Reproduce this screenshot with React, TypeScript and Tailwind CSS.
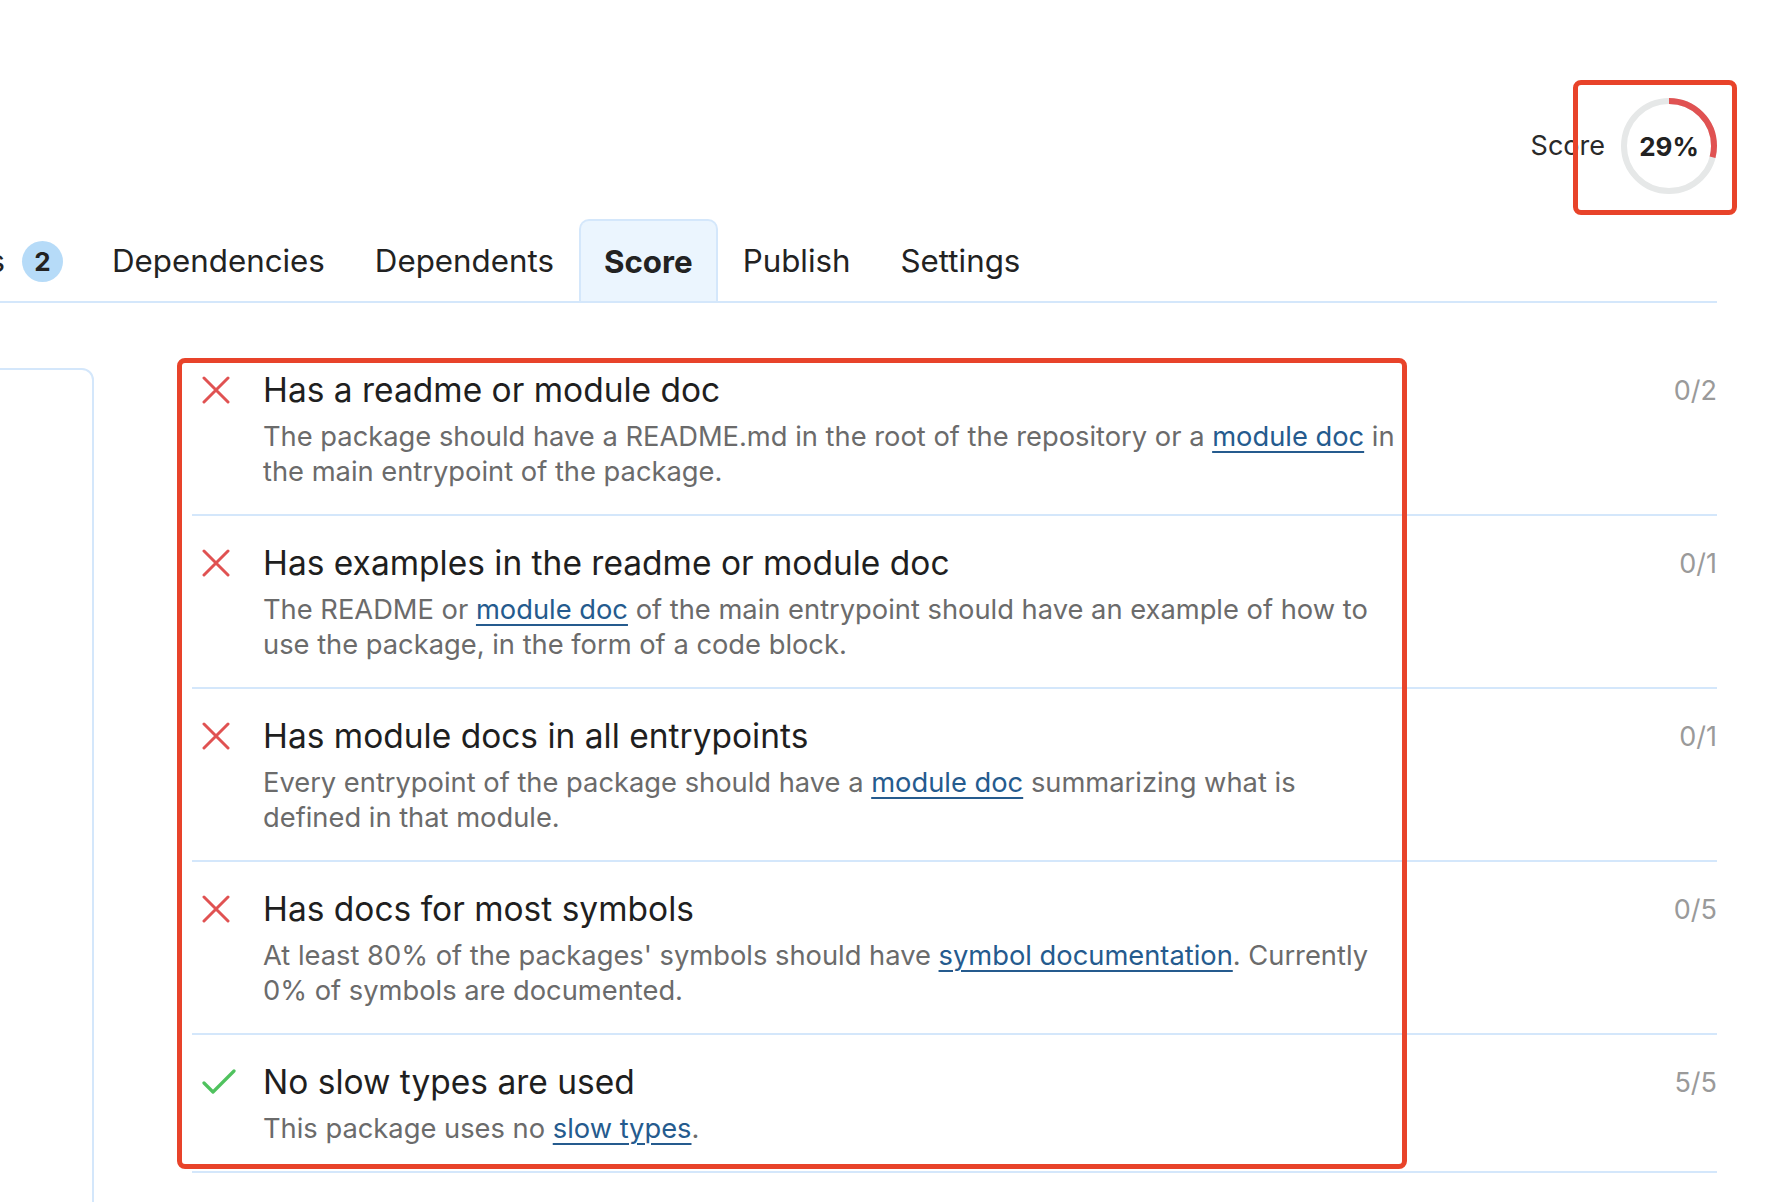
import React from 'react';

type Check = {
    title: string;
    passed: boolean;
    score: string;
    lines: React.ReactNode[];
};

const DocLink: React.FC<{ children: React.ReactNode }> = ({ children }) => (
    <a href="#" className="text-[#255b8e] underline decoration-2 underline-offset-[5px]">{children}</a>
);

const checks: Check[] = [
    {
        title: 'Has a readme or module doc',
        passed: false,
        score: '0/2',
        lines: [
            <>The package should have a README.md in the root of the repository or a <DocLink>module doc</DocLink> in</>,
            <>the main entrypoint of the package.</>,
        ],
    },
    {
        title: 'Has examples in the readme or module doc',
        passed: false,
        score: '0/1',
        lines: [
            <>The README or <DocLink>module doc</DocLink> of the main entrypoint should have an example of how to</>,
            <>use the package, in the form of a code block.</>,
        ],
    },
    {
        title: 'Has module docs in all entrypoints',
        passed: false,
        score: '0/1',
        lines: [
            <>Every entrypoint of the package should have a <DocLink>module doc</DocLink> summarizing what is</>,
            <>defined in that module.</>,
        ],
    },
    {
        title: 'Has docs for most symbols',
        passed: false,
        score: '0/5',
        lines: [
            <>At least 80% of the packages' symbols should have <DocLink>symbol documentation</DocLink>. Currently</>,
            <>0% of symbols are documented.</>,
        ],
    },
    {
        title: 'No slow types are used',
        passed: true,
        score: '5/5',
        lines: [<>This package uses no <DocLink>slow types</DocLink>.</>],
    },
];

const CrossIcon = () => (
    <svg width="28" height="28" viewBox="0 0 28 28" fill="none" stroke="#e05252" strokeWidth="3" strokeLinecap="round">
        <path d="M2 2 L26 26 M26 2 L2 26" />
    </svg>
);

const CheckIcon = () => (
    <svg width="34" height="26" viewBox="0 0 34 26" fill="none" stroke="#4fc25e" strokeWidth="3.2" strokeLinecap="round" strokeLinejoin="round">
        <path d="M2 14 L11 23 L32 2" />
    </svg>
);

const ScoreRing: React.FC<{ percent: number }> = ({ percent }) => {
    const r = 45;
    const circ = 2 * Math.PI * r;
    return (
        <div className="relative w-[96px] h-[96px] flex items-center justify-center">
            <svg width="96" height="96" viewBox="0 0 96 96" className="absolute inset-0 -rotate-90">
                <circle cx="48" cy="48" r={r} fill="none" stroke="#e6e8e8" strokeWidth="6" />
                <circle
                    cx="48"
                    cy="48"
                    r={r}
                    fill="none"
                    stroke="#e05252"
                    strokeWidth="6"
                    strokeDasharray={`${(circ * percent) / 100} ${circ}`}
                />
            </svg>
            <span className="relative text-[26px] font-bold text-[#222]">{percent}%</span>
        </div>
    );
};

const tabs = ['Dependencies', 'Dependents', 'Score', 'Publish', 'Settings'];

export default function App() {
    return (
        <div className="h-screen w-full overflow-hidden bg-white font-['Inter',sans-serif] text-[#222]">
            <div className="pr-[55px] pt-[98px]">
                <div className="flex justify-end">
                    <div className="relative flex items-center gap-4">
                        <span className="text-[27px] text-[#2a2a2a]">Score</span>
                        <ScoreRing percent={29} />
                        <div className="absolute -right-[20px] -top-[18px] w-[164px] h-[135px] border-[5px] border-[#e8432a] rounded-[8px] pointer-events-none" />
                    </div>
                </div>

                <nav className="mt-[25px] flex h-[84px] border-b-2 border-[#d4e7fb] text-[31.3px]">
                    <div className="w-[87px] shrink-0 overflow-hidden flex justify-end items-center gap-[17px] pr-[24px] pt-[2px]">
                        <span className="shrink-0">Versions</span>
                        <span className="shrink-0 w-[41px] h-[41px] rounded-full bg-[#b6dbf8] flex items-center justify-center text-[26px] font-bold">2</span>
                    </div>
                    {tabs.map((tab) =>
                        tab === 'Score' ? (
                            <div key={tab} className="flex items-center px-[23px] pt-[2px] bg-[#ebf5fe] border-2 border-b-0 border-[#d4e7fb] rounded-t-[10px] font-bold">
                                {tab}
                            </div>
                        ) : (
                            <div key={tab} className="flex items-center px-[25px] pt-[2px]">
                                {tab}
                            </div>
                        )
                    )}
                </nav>

                <main className="mt-[65px] flex">
                    <aside className="-ml-[20px] w-[114px] shrink-0 h-[1000px] border-2 border-[#d4e7fb] rounded-[12px]" />
                    <section className="relative ml-[98px] flex-1">
                        {checks.map((c, i) => (
                            <div key={c.title} className={`flex border-b-2 border-[#d4e7fb] pb-[25px] ${i === 0 ? 'pt-[2px]' : 'pt-[27px]'}`}>
                                <div className="w-[71px] shrink-0 h-[40px] flex items-center pl-[10px]">
                                    {c.passed ? <CheckIcon /> : <CrossIcon />}
                                </div>
                                <div className="flex-1">
                                    <div className="flex justify-between items-center h-[40px]">
                                        <h3 className="text-[33.5px] leading-[40px] text-[#1f1f1f]">{c.title}</h3>
                                        <span className="text-[27px] text-[#9a9a9a] pt-[3px]">{c.score}</span>
                                    </div>
                                    <p className="mt-[9px] text-[27.3px] leading-[35px] text-[#6b6b6b] whitespace-nowrap">
                                        {c.lines.map((line, j) => (
                                            <React.Fragment key={j}>
                                                {j > 0 && <br />}
                                                {line}
                                            </React.Fragment>
                                        ))}
                                    </p>
                                </div>
                            </div>
                        ))}
                        <div className="absolute -left-[15px] -top-[10px] w-[1230px] h-[811px] border-[5px] border-[#e8432a] rounded-[8px] pointer-events-none" />
                    </section>
                </main>
            </div>
        </div>
    );
}
